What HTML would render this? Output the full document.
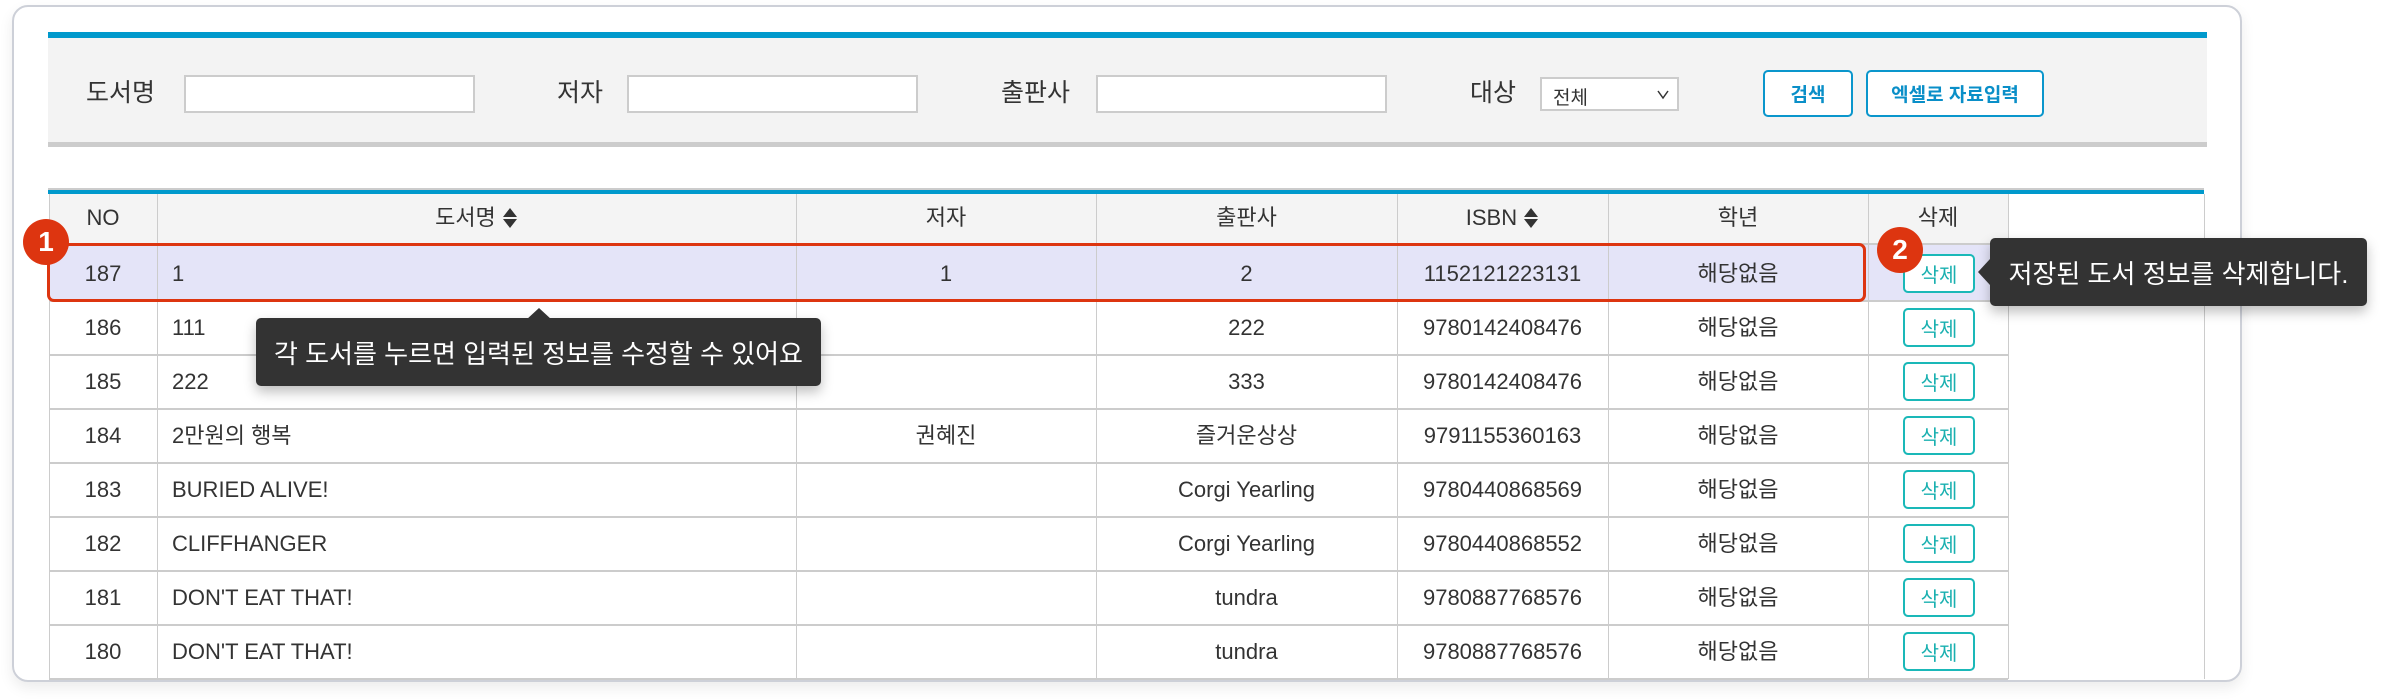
<!DOCTYPE html>
<html><head><meta charset="utf-8"><style>
*{margin:0;padding:0;box-sizing:border-box}
body{width:2383px;height:700px;background:#fff;position:relative;overflow:hidden;font-family:"Liberation Sans","Noto Sans CJK KR",sans-serif;color:#333}
.a{position:absolute}
.card{left:12px;top:5px;width:2230px;height:677px;border:2px solid #cdd0d8;border-radius:16px;box-shadow:0 6px 14px rgba(0,0,0,.08)}
.lbl{font-size:25px;color:#333;line-height:30px}
.inp{background:#fff;border:2px solid #ccc;height:38px}
.btn{border:2px solid #0a96cc;border-radius:5px;color:#0a8fc8;font-size:19px;font-weight:bold;display:flex;align-items:center;justify-content:center;background:#fff}
.vl{width:1px;background:#ccc;top:194px;height:485px}
.hl{height:2px;background:#ccc;left:49px;width:1959px}
.c{font-size:22px;line-height:24px;text-align:center;white-space:nowrap}
.l{font-size:22px;line-height:24px;white-space:nowrap}
.del{left:1903px;width:72px;height:39px;border:2px solid #1ab8b8;border-radius:5px;color:#1ab0b0;font-size:20px;display:flex;align-items:center;justify-content:center;background:#fff}
.badge{width:46px;height:46px;border-radius:50%;background:#dd3510;color:#fff;font-weight:bold;font-size:28px;display:flex;align-items:center;justify-content:center}
.tip{background:#333;color:#fff;border-radius:5px;box-shadow:0 6px 12px rgba(0,0,0,.25);font-size:26px;display:flex;align-items:center;justify-content:center;white-space:nowrap}
</style></head><body>
<div class="a card"></div>
<div class="a" style="left:48px;top:32px;width:2159px;height:6px;background:#0099cc"></div>
<div class="a" style="left:48px;top:38px;width:2159px;height:104px;background:#f3f3f3"></div>
<div class="a" style="left:48px;top:142px;width:2159px;height:5px;background:#ccc"></div>
<div class="a lbl" style="left:86px;top:78px">도서명</div>
<div class="a inp" style="left:184px;top:75px;width:291px"></div>
<div class="a lbl" style="left:557px;top:78px">저자</div>
<div class="a inp" style="left:627px;top:75px;width:291px"></div>
<div class="a lbl" style="left:1001px;top:78px">출판사</div>
<div class="a inp" style="left:1096px;top:75px;width:291px"></div>
<div class="a lbl" style="left:1470px;top:78px">대상</div>
<div class="a" style="left:1540px;top:77px;width:139px;height:34px;background:#fff;border:2px solid #ccc;font-size:19px;padding:4px 0 0 11px">전체<svg class="a" style="left:115px;top:11px" width="12" height="10"><path d="M1 1 L6 8 L11 1" fill="none" stroke="#333" stroke-width="1.5"/></svg></div>
<div class="a btn" style="left:1763px;top:70px;width:90px;height:47px">검색</div>
<div class="a btn" style="left:1866px;top:70px;width:178px;height:47px">엑셀로 자료입력</div>
<div class="a" style="left:48px;top:188px;width:2156px;height:2px;background:#ccc"></div>
<div class="a" style="left:48px;top:190px;width:2156px;height:4px;background:#0099cc"></div>
<div class="a" style="left:49px;top:194px;width:1959px;height:49px;background:#f4f4f4"></div>
<div class="a" style="left:49px;top:243px;width:1959px;height:58px;background:#e4e4f8"></div>
<div class="a hl" style="top:243px"></div><div class="a hl" style="top:300px"></div><div class="a hl" style="top:354px"></div><div class="a hl" style="top:408px"></div><div class="a hl" style="top:462px"></div><div class="a hl" style="top:516px"></div><div class="a hl" style="top:570px"></div><div class="a hl" style="top:624px"></div><div class="a hl" style="top:678px"></div>
<div class="a vl" style="left:49px"></div><div class="a vl" style="left:157px"></div><div class="a vl" style="left:796px"></div><div class="a vl" style="left:1096px"></div><div class="a vl" style="left:1397px"></div><div class="a vl" style="left:1608px"></div><div class="a vl" style="left:1868px"></div><div class="a vl" style="left:2008px"></div><div class="a vl" style="left:2204px"></div>
<div class="a c" style="left:49px;width:108px;top:206px">NO</div>
<div class="a c" style="left:157px;width:639px;top:206px">도서명 <svg width="16" height="24" style="vertical-align:-5px"><path d="M8 2 L15 11 L1 11Z M1 13 L15 13 L8 22Z" fill="#333"/></svg></div>
<div class="a c" style="left:796px;width:300px;top:206px">저자</div>
<div class="a c" style="left:1096px;width:301px;top:206px">출판사</div>
<div class="a c" style="left:1397px;width:211px;top:206px">ISBN <svg width="16" height="24" style="vertical-align:-5px"><path d="M8 2 L15 11 L1 11Z M1 13 L15 13 L8 22Z" fill="#333"/></svg></div>
<div class="a c" style="left:1608px;width:260px;top:206px">학년</div>
<div class="a c" style="left:1868px;width:140px;top:206px">삭제</div>
<div class="a c" style="left:49px;width:108px;top:262px">187</div><div class="a l" style="left:172px;top:262px">1</div><div class="a c" style="left:796px;width:300px;top:262px">1</div><div class="a c" style="left:1096px;width:301px;top:262px">2</div><div class="a c" style="left:1397px;width:211px;top:262px">1152121223131</div><div class="a c" style="left:1608px;width:260px;top:262px">해당없음</div><div class="a del" style="top:254px">삭제</div>
<div class="a c" style="left:49px;width:108px;top:316px">186</div><div class="a l" style="left:172px;top:316px">111</div><div class="a c" style="left:1096px;width:301px;top:316px">222</div><div class="a c" style="left:1397px;width:211px;top:316px">9780142408476</div><div class="a c" style="left:1608px;width:260px;top:316px">해당없음</div><div class="a del" style="top:308px">삭제</div>
<div class="a c" style="left:49px;width:108px;top:370px">185</div><div class="a l" style="left:172px;top:370px">222</div><div class="a c" style="left:1096px;width:301px;top:370px">333</div><div class="a c" style="left:1397px;width:211px;top:370px">9780142408476</div><div class="a c" style="left:1608px;width:260px;top:370px">해당없음</div><div class="a del" style="top:362px">삭제</div>
<div class="a c" style="left:49px;width:108px;top:424px">184</div><div class="a l" style="left:172px;top:424px">2만원의 행복</div><div class="a c" style="left:796px;width:300px;top:424px">권혜진</div><div class="a c" style="left:1096px;width:301px;top:424px">즐거운상상</div><div class="a c" style="left:1397px;width:211px;top:424px">9791155360163</div><div class="a c" style="left:1608px;width:260px;top:424px">해당없음</div><div class="a del" style="top:416px">삭제</div>
<div class="a c" style="left:49px;width:108px;top:478px">183</div><div class="a l" style="left:172px;top:478px">BURIED ALIVE!</div><div class="a c" style="left:1096px;width:301px;top:478px">Corgi Yearling</div><div class="a c" style="left:1397px;width:211px;top:478px">9780440868569</div><div class="a c" style="left:1608px;width:260px;top:478px">해당없음</div><div class="a del" style="top:470px">삭제</div>
<div class="a c" style="left:49px;width:108px;top:532px">182</div><div class="a l" style="left:172px;top:532px">CLIFFHANGER</div><div class="a c" style="left:1096px;width:301px;top:532px">Corgi Yearling</div><div class="a c" style="left:1397px;width:211px;top:532px">9780440868552</div><div class="a c" style="left:1608px;width:260px;top:532px">해당없음</div><div class="a del" style="top:524px">삭제</div>
<div class="a c" style="left:49px;width:108px;top:586px">181</div><div class="a l" style="left:172px;top:586px">DON'T EAT THAT!</div><div class="a c" style="left:1096px;width:301px;top:586px">tundra</div><div class="a c" style="left:1397px;width:211px;top:586px">9780887768576</div><div class="a c" style="left:1608px;width:260px;top:586px">해당없음</div><div class="a del" style="top:578px">삭제</div>
<div class="a c" style="left:49px;width:108px;top:640px">180</div><div class="a l" style="left:172px;top:640px">DON'T EAT THAT!</div><div class="a c" style="left:1096px;width:301px;top:640px">tundra</div><div class="a c" style="left:1397px;width:211px;top:640px">9780887768576</div><div class="a c" style="left:1608px;width:260px;top:640px">해당없음</div><div class="a del" style="top:632px">삭제</div>
<div class="a" style="left:47px;top:243px;width:1819px;height:59px;border:3px solid #dd3510;border-radius:7px"></div>
<div class="a badge" style="left:23px;top:219px">1</div>
<div class="a badge" style="left:1877px;top:227px">2</div>
<div class="a tip" style="left:256px;top:318px;width:565px;height:68px">각 도서를 누르면 입력된 정보를 수정할 수 있어요</div>
<svg class="a" style="left:526px;top:308px" width="26" height="12"><path d="M0 12 L13 0 L26 12Z" fill="#333"/></svg>
<div class="a tip" style="left:1990px;top:238px;width:377px;height:68px">저장된 도서 정보를 삭제합니다.</div>
<svg class="a" style="left:1978px;top:259px" width="12" height="26"><path d="M12 0 L0 13 L12 26Z" fill="#333"/></svg>
</body></html>
